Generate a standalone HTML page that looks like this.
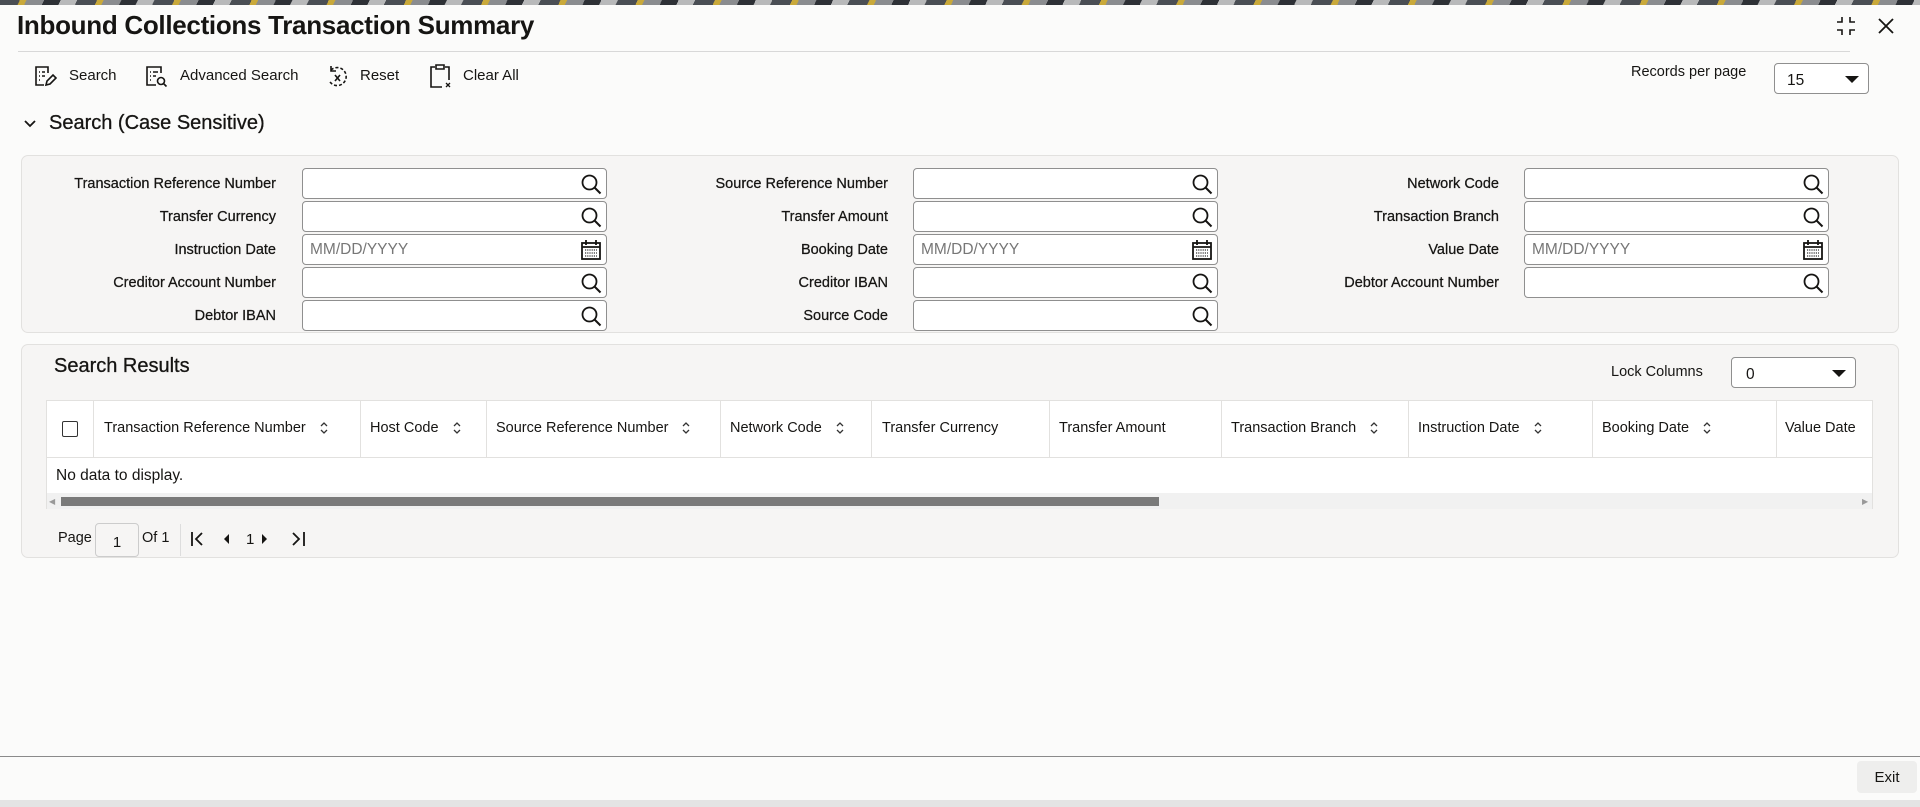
<!DOCTYPE html>
<html><head><meta charset="utf-8">
<style>
*{box-sizing:border-box;margin:0;padding:0}
body{width:1920px;height:807px;position:relative;overflow:hidden;background:#fbfbfa;font-family:"Liberation Sans",sans-serif;color:#161513}
.a{position:absolute;white-space:nowrap}
.banner{position:absolute;left:0;top:0;width:1920px;height:5px;background:repeating-linear-gradient(115deg,#4a4e54 0 18px,#c9a93a 18px 24px,#8a8c8f 24px 40px,#2e3136 40px 55px,#b8b9ba 55px 70px)}
.title{left:17px;top:10px;font-size:26px;font-weight:bold;letter-spacing:-0.3px}
.hr{left:18px;top:51px;width:1832px;height:1px;background:#d8d8d8}
.tb{top:67px;font-size:15px}
.panel{position:absolute;left:21px;width:1878px;background:#f6f5f4;border:1px solid #e2e1df;border-radius:7px}
.lbl{font-size:14.5px;text-align:right;width:260px;-webkit-text-stroke:0.25px #161513}
.inp{position:absolute;width:305px;height:31px;background:#fff;border:1px solid #8f8f8f;border-radius:4px}
.inp svg{position:absolute;right:4px;top:4px}
.ph{position:absolute;left:7px;top:6px;font-size:15.5px;color:#777}
.sel{position:absolute;background:#fff;border:1px solid #8f8f8f;border-radius:4px;font-size:15.5px}
.tri{position:absolute;width:0;height:0;border-left:7px solid transparent;border-right:7px solid transparent;border-top:7px solid #161513}
.th{top:418px;height:20px;font-size:14.5px;display:flex;align-items:center}
.dv{position:absolute;top:400px;width:1px;height:57px;background:#e2e1df}
.srt{display:block;margin-left:13px}
</style></head><body>
<div class="banner"></div>
<div class="a title">Inbound Collections Transaction Summary</div>
<svg class="a" style="left:1836px;top:16px" width="20" height="20" viewBox="0 0 20 20" fill="none" stroke="#161513" stroke-width="1.6"><path d="M6 1v5H1M14 1v5h5M6 19v-5H1M14 19v-5h5"/></svg>
<svg class="a" style="left:1877px;top:17px" width="18" height="18" viewBox="0 0 18 18" stroke="#161513" stroke-width="1.8"><path d="M2 2l14 14M16 2L2 16"/></svg>
<div class="a hr"></div>

<svg class="a" style="left:33px;top:64px" width="24" height="24" viewBox="0 0 24 24" fill="none" stroke="#161513" stroke-width="1.6"><path d="M15 9V3H3v18h8"/><path d="M6 8h1M9 8h3M6 12h1M9 12h3M6 16h1"/><path d="M13 21l1-4 6-6 3 3-6 6z"/></svg>
<div class="a tb" style="left:69px">Search</div>
<svg class="a" style="left:144px;top:64px" width="24" height="24" viewBox="0 0 24 24" fill="none" stroke="#161513" stroke-width="1.6"><path d="M17 9V3H3v18h9"/><path d="M6 8h1M9 8h5M6 12h1M9 12h3M6 16h1"/><circle cx="17" cy="17" r="3.5"/><path d="M19.5 19.5l3 3"/></svg>
<div class="a tb" style="left:180px">Advanced Search</div>
<svg class="a" style="left:325px;top:64px" width="26" height="24" viewBox="0 0 26 24" fill="none" stroke="#161513" stroke-width="1.6"><path d="M6 6a9 9 0 1 1-1 12" stroke-dasharray="3 2"/><path d="M6 2v5h5"/><path d="M10 11l5 6M15 11l-5 6"/></svg>
<div class="a tb" style="left:360px">Reset</div>
<svg class="a" style="left:428px;top:63px" width="24" height="26" viewBox="0 0 24 26" fill="none" stroke="#161513" stroke-width="1.6"><path d="M7 4H3v20h11M17 4h4v13"/><path d="M8 2h8v4H8z"/><path d="M18 20l4 4M22 20l-4 4" stroke-width="1.3"/></svg>
<div class="a tb" style="left:463px">Clear All</div>

<div class="a" style="left:1631px;top:64px;font-size:14.5px">Records per page</div>
<div class="sel" style="left:1774px;top:63px;width:95px;height:31px"><span class="a" style="left:12px;top:8px">15</span><div class="tri" style="left:70px;top:12px"></div></div>

<svg class="a" style="left:23px;top:118px" width="14" height="12" viewBox="0 0 14 12" fill="none" stroke="#161513" stroke-width="1.8"><path d="M2 3l5 5 5-5"/></svg>
<div class="a" style="left:49px;top:112px;font-size:20px;-webkit-text-stroke:0.3px #161513">Search (Case Sensitive)</div>

<div class="panel" style="top:155px;height:178px"></div>
<div class="a lbl" style="left:16px;top:176px">Transaction Reference Number</div>
<div class="a lbl" style="left:16px;top:209px">Transfer Currency</div>
<div class="a lbl" style="left:16px;top:242px">Instruction Date</div>
<div class="a lbl" style="left:16px;top:275px">Creditor Account Number</div>
<div class="a lbl" style="left:16px;top:308px">Debtor IBAN</div>
<div class="a lbl" style="left:628px;top:176px">Source Reference Number</div>
<div class="a lbl" style="left:628px;top:209px">Transfer Amount</div>
<div class="a lbl" style="left:628px;top:242px">Booking Date</div>
<div class="a lbl" style="left:628px;top:275px">Creditor IBAN</div>
<div class="a lbl" style="left:628px;top:308px">Source Code</div>
<div class="a lbl" style="left:1239px;top:176px">Network Code</div>
<div class="a lbl" style="left:1239px;top:209px">Transaction Branch</div>
<div class="a lbl" style="left:1239px;top:242px">Value Date</div>
<div class="a lbl" style="left:1239px;top:275px">Debtor Account Number</div>

<svg width="0" height="0" style="position:absolute"><defs>
<symbol id="mg" viewBox="0 0 22 22"><circle cx="9.5" cy="9.5" r="7" fill="none" stroke="#161513" stroke-width="1.8"/><path d="M14.5 14.5l6 6" stroke="#161513" stroke-width="2"/></symbol>
<symbol id="cal" viewBox="0 0 22 22"><rect x="2" y="4" width="18" height="16" fill="none" stroke="#161513" stroke-width="1.8"/><path d="M6 1v5M16 1v5M2 8h18" stroke="#161513" stroke-width="1.8"/><path d="M5 11h12M5 14h12M5 17h12" stroke="#555" stroke-width="1.4" stroke-dasharray="1.2 1"/></symbol>
<symbol id="so" viewBox="0 0 10 14"><path d="M2 5l3-3 3 3M2 9l3 3 3-3" fill="none" stroke="#333" stroke-width="1.3"/></symbol>
</defs></svg>

<div class="inp" style="left:302px;top:168px"><svg width="22" height="22"><use href="#mg"/></svg></div>
<div class="inp" style="left:302px;top:201px"><svg width="22" height="22"><use href="#mg"/></svg></div>
<div class="inp" style="left:302px;top:234px"><span class="ph">MM/DD/YYYY</span><svg width="22" height="22"><use href="#cal"/></svg></div>
<div class="inp" style="left:302px;top:267px"><svg width="22" height="22"><use href="#mg"/></svg></div>
<div class="inp" style="left:302px;top:300px"><svg width="22" height="22"><use href="#mg"/></svg></div>
<div class="inp" style="left:913px;top:168px"><svg width="22" height="22"><use href="#mg"/></svg></div>
<div class="inp" style="left:913px;top:201px"><svg width="22" height="22"><use href="#mg"/></svg></div>
<div class="inp" style="left:913px;top:234px"><span class="ph">MM/DD/YYYY</span><svg width="22" height="22"><use href="#cal"/></svg></div>
<div class="inp" style="left:913px;top:267px"><svg width="22" height="22"><use href="#mg"/></svg></div>
<div class="inp" style="left:913px;top:300px"><svg width="22" height="22"><use href="#mg"/></svg></div>
<div class="inp" style="left:1524px;top:168px"><svg width="22" height="22"><use href="#mg"/></svg></div>
<div class="inp" style="left:1524px;top:201px"><svg width="22" height="22"><use href="#mg"/></svg></div>
<div class="inp" style="left:1524px;top:234px"><span class="ph">MM/DD/YYYY</span><svg width="22" height="22"><use href="#cal"/></svg></div>
<div class="inp" style="left:1524px;top:267px"><svg width="22" height="22"><use href="#mg"/></svg></div>

<div class="panel" style="top:344px;height:214px"></div>
<div class="a" style="left:54px;top:355px;font-size:20px;-webkit-text-stroke:0.3px #161513">Search Results</div>
<div class="a" style="left:1611px;top:364px;font-size:14.5px">Lock Columns</div>
<div class="sel" style="left:1731px;top:357px;width:125px;height:31px"><span class="a" style="left:14px;top:8px">0</span><div class="tri" style="left:100px;top:12px"></div></div>

<div class="a" style="left:46px;top:400px;width:1827px;height:109px;background:#fff;border:1px solid #e2e1df"></div>
<div class="a" style="left:46px;top:457px;width:1827px;height:1px;background:#e2e1df"></div>
<div class="a" style="left:47px;top:493px;width:1825px;height:16px;background:#f1f1f1"></div>
<div class="a" style="left:61px;top:497px;width:1098px;height:9px;background:#7a7a7a"></div>
<div class="a" style="left:49px;top:497px;font-size:8px;color:#999">◀</div>
<div class="a" style="left:1862px;top:497px;font-size:8px;color:#999">▶</div>
<div class="a" style="left:62px;top:421px;width:16px;height:16px;border:1.5px solid #333;border-radius:2px;background:#fff"></div>
<div class="dv" style="left:93px"></div><div class="dv" style="left:360px"></div><div class="dv" style="left:486px"></div><div class="dv" style="left:720px"></div><div class="dv" style="left:871px"></div><div class="dv" style="left:1049px"></div><div class="dv" style="left:1221px"></div><div class="dv" style="left:1408px"></div><div class="dv" style="left:1592px"></div><div class="dv" style="left:1776px"></div>
<div class="a th" style="left:104px">Transaction Reference Number<svg class="srt" width="10" height="14"><use href="#so"/></svg></div>
<div class="a th" style="left:370px">Host Code<svg class="srt" width="10" height="14"><use href="#so"/></svg></div>
<div class="a th" style="left:496px">Source Reference Number<svg class="srt" width="10" height="14"><use href="#so"/></svg></div>
<div class="a th" style="left:730px">Network Code<svg class="srt" width="10" height="14"><use href="#so"/></svg></div>
<div class="a th" style="left:882px">Transfer Currency</div>
<div class="a th" style="left:1059px">Transfer Amount</div>
<div class="a th" style="left:1231px">Transaction Branch<svg class="srt" width="10" height="14"><use href="#so"/></svg></div>
<div class="a th" style="left:1418px">Instruction Date<svg class="srt" width="10" height="14"><use href="#so"/></svg></div>
<div class="a th" style="left:1602px">Booking Date<svg class="srt" width="10" height="14"><use href="#so"/></svg></div>
<div class="a th" style="left:1785px">Value Date</div>
<div class="a" style="left:56px;top:467px;font-size:15.5px">No data to display.</div>

<div class="a" style="left:58px;top:530px;font-size:14.5px">Page</div>
<div class="a" style="left:95px;top:523px;width:44px;height:34px;border:1px solid #ccc;border-radius:4px;background:#f6f5f4;font-size:15px;text-align:center;padding-top:10px">1</div>
<div class="a" style="left:142px;top:530px;font-size:14.5px">Of 1</div>
<div class="a" style="left:180px;top:524px;width:1px;height:32px;background:#ddd"></div>
<svg class="a" style="left:190px;top:531px" width="120" height="16" viewBox="0 0 120 16" fill="none" stroke="#161513" stroke-width="1.8"><path d="M2 1v14M12 2L6 8l6 6"/><path d="M39 3l-5 5 5 5z" fill="#161513" stroke="none"/><text x="56" y="13" font-size="15" fill="#161513" stroke="none" font-family="Liberation Sans">1</text><path d="M72 3l5 5-5 5z" fill="#161513" stroke="none"/><path d="M103 2l6 6-6 6M114 1v14"/></svg>

<div class="a" style="left:0;top:756px;width:1920px;height:1px;background:#8a8a8a"></div>
<div class="a" style="left:1857px;top:761px;width:60px;height:32px;background:#eeeeed;border-radius:4px;font-size:15px;text-align:center;padding-top:8px">Exit</div>
<div class="a" style="left:0;top:800px;width:1920px;height:7px;background:#e4e4e4"></div>
</body></html>
